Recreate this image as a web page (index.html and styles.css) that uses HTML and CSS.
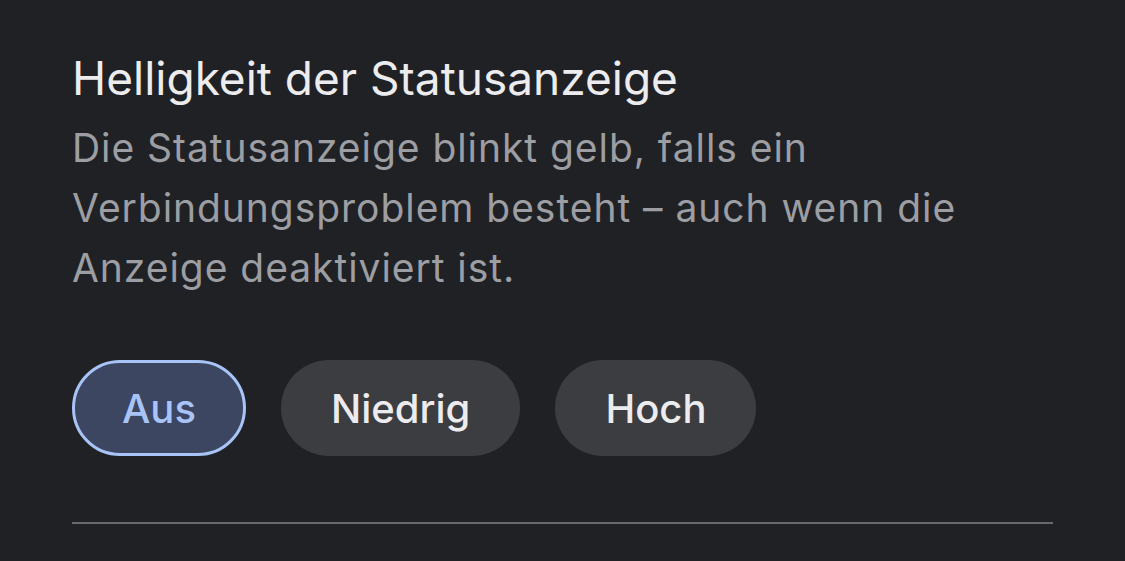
FILE: index.html
```html
<!DOCTYPE html>
<html lang="de">
<head>
    <meta charset="UTF-8">
    <meta name="viewport" content="width=device-width, initial-scale=1.0">
    <title>Statusanzeige</title>
    <link rel="stylesheet" href="styles.css">
</head>
<body>
    <div class="setting">
        <h1 class="title">Helligkeit der Statusanzeige</h1>
        <p class="desc">Die Statusanzeige blinkt gelb, falls ein<br>Verbindungsproblem besteht – auch wenn die<br>Anzeige deaktiviert ist.</p>

        <div class="chips">
            <button class="chip selected">Aus</button>
            <button class="chip">Niedrig</button>
            <button class="chip">Hoch</button>
        </div>

        <div class="divider"></div>
    </div>
</body>
</html>
```

FILE: styles.css
```css
/* Page */
body {
  margin: 0;
  background-color: #202124;
  font-family: Inter, Roboto, "Liberation Sans", sans-serif;
}

/* Setting block */
.setting {
  padding: 48px 72px 0 72px;
  width: 981px;
}

.title {
  margin: 0;
  color: #ececef;
  font-size: 46px;
  font-weight: 400;
  line-height: 60px;
}

.desc {
  margin: 10px 0 0 0;
  color: #9c9ea3;
  font-size: 39px;
  letter-spacing: 0.95px;
  line-height: 60px;
}

/* Option chips */
.chips {
  display: flex;
  gap: 35px;
  margin-top: 62px;
}

.chip {
  height: 96px;
  padding: 0 47px;
  border: 3px solid transparent;
  border-radius: 48px;
  background-color: #3c3d41;
  color: #ececef;
  font-family: Inter, Roboto, "Liberation Sans", sans-serif;
  font-size: 40px;
  font-weight: 500;
}

.chip.selected {
  background-color: #3c4661;
  border-color: #a8c4f7;
  color: #a8c4f7;
}

.divider {
  height: 2px;
  margin-top: 66px;
  background-color: #68696d;
}
```
